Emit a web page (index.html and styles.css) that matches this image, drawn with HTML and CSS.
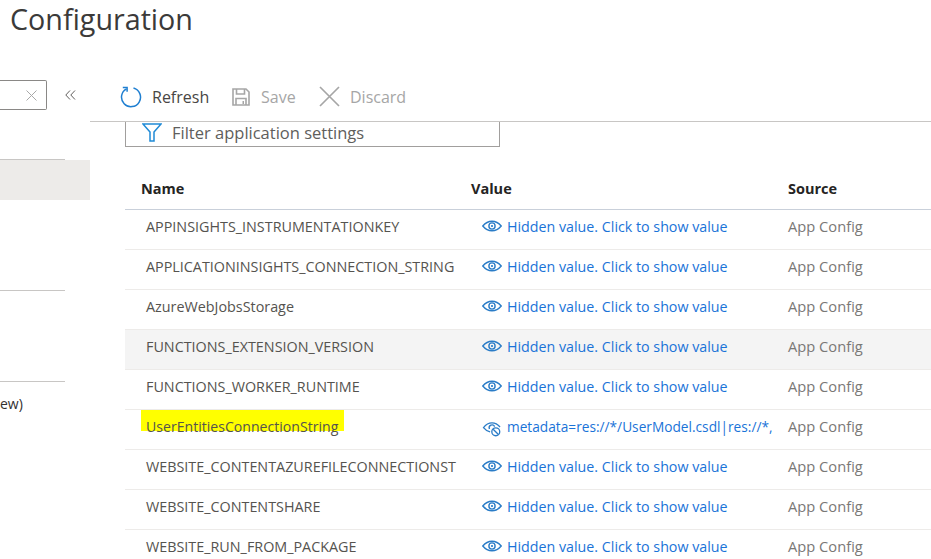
FILE: index.html
```html
<!DOCTYPE html>
<html lang="en">
<head>
<meta charset="utf-8">
<title>Configuration</title>
<link rel="stylesheet" href="styles.css">
</head>
<body>
<svg class="defs" width="0" height="0" aria-hidden="true">
  <symbol id="eye" viewBox="0 0 20 14">
    <path d="M.8 7C3.500 3.700 6.500 2.200 10 2.200s6.500 1.500 9.200 4.800c-2.700 3.300-5.700 4.800-9.200 4.800S3.500 10.300.8 7Z" fill="none" stroke="currentColor" stroke-width="1.400"/>
    <circle cx="10" cy="7" r="3.100" fill="none" stroke="currentColor" stroke-width="1.400"/>
    <circle cx="10" cy="7" r="1.100" fill="currentColor"/>
  </symbol>
  <symbol id="eye-off" viewBox="0 0 20 18">
    <path d="M8 12.500C5.200 12 3 10.500 1 8c2.600-3.400 5.600-5 9-5 3.200 0 6 1.400 8.500 4.400" fill="none" stroke="currentColor" stroke-width="1.400"/>
    <path d="M7.300 9.500A3 3 0 1 1 12.800 7" fill="none" stroke="currentColor" stroke-width="1.400"/>
    <circle cx="14" cy="12.500" r="4.200" fill="none" stroke="currentColor" stroke-width="1.400"/>
    <path d="M11.200 9.700l5.600 5.600" stroke="currentColor" stroke-width="1.400"/>
  </symbol>
</svg>
<h1 class="title">Configuration</h1>
<div class="layout">
  <aside class="sidebar">
    <div class="search-row">
      <div class="search">
        <svg class="search-x" width="11" height="11" viewBox="0 0 11 11"><path d="M.5.500l10 10M10.500.500l-10 10" stroke="#a8a8a8" stroke-width="1"/></svg>
      </div>
      <svg class="collapse" width="11" height="10" viewBox="0 0 11 10"><path d="M5 .5.800 5 5 9.500M10 .5 5.800 5 10 9.500" fill="none" stroke="#605e5c" stroke-width="1"/></svg>
    </div>
    <div class="side-group first"></div>
    <div class="side-selected"></div>
    <div class="side-group second"></div>
    <div class="side-group third"></div>
    <div class="side-text">ew)</div>
  </aside>
  <main class="main">
    <div class="toolbar">
      <button class="tool refresh">
        <svg width="22" height="22" viewBox="0 0 22 22"><path d="M6.500 2.800A9.500 9.500 0 1 0 13.500 2" fill="none" stroke="#1f7fd1" stroke-width="1.500"/><path d="M2.800 1.500h4.300v4.300" fill="none" stroke="#1f7fd1" stroke-width="1.500"/></svg>
        <span>Refresh</span>
      </button>
      <button class="tool disabled save">
        <svg width="18" height="18" viewBox="0 0 18 18"><path d="M1 1h13l3 3v13H1Z" fill="none" stroke="#a6a6a6" stroke-width="1.600"/><path d="M4.500 1v5h8V1M4 17v-6.500h10V17" fill="none" stroke="#a6a6a6" stroke-width="1.600"/><path d="M10.500 13h1.500v3h-1.500z" fill="#a6a6a6"/></svg>
        <span>Save</span>
      </button>
      <button class="tool disabled discard">
        <svg width="21" height="21" viewBox="0 0 21 21"><path d="M1 1l19 19M20 1 1 20" stroke="#a6a6a6" stroke-width="1.700"/></svg>
        <span>Discard</span>
      </button>
    </div>
    <div class="content">
      <div class="filter">
        <svg width="20" height="19" viewBox="0 0 20 19"><path d="M1 1h18l-7 8v9H8V9Z" fill="none" stroke="#1f8ad6" stroke-width="1.500"/></svg>
        <span>Filter application settings</span>
      </div>
      <div class="table">
        <div class="row head">
          <div class="c-name">Name</div>
          <div class="c-value">Value</div>
          <div class="c-source">Source</div>
        </div>
        <div class="row">
          <div class="c-name">APPINSIGHTS_INSTRUMENTATIONKEY</div>
          <a class="c-value"><svg class="ico"><use href="#eye"/></svg>Hidden value. Click to show value</a>
          <div class="c-source">App Config</div>
        </div>
        <div class="row">
          <div class="c-name">APPLICATIONINSIGHTS_CONNECTION_STRING</div>
          <a class="c-value"><svg class="ico"><use href="#eye"/></svg>Hidden value. Click to show value</a>
          <div class="c-source">App Config</div>
        </div>
        <div class="row">
          <div class="c-name">AzureWebJobsStorage</div>
          <a class="c-value"><svg class="ico"><use href="#eye"/></svg>Hidden value. Click to show value</a>
          <div class="c-source">App Config</div>
        </div>
        <div class="row hover">
          <div class="c-name">FUNCTIONS_EXTENSION_VERSION</div>
          <a class="c-value"><svg class="ico"><use href="#eye"/></svg>Hidden value. Click to show value</a>
          <div class="c-source">App Config</div>
        </div>
        <div class="row">
          <div class="c-name">FUNCTIONS_WORKER_RUNTIME</div>
          <a class="c-value"><svg class="ico"><use href="#eye"/></svg>Hidden value. Click to show value</a>
          <div class="c-source">App Config</div>
        </div>
        <div class="row">
          <div class="c-name"><span class="marked">UserEntitiesConnectionString</span></div>
          <a class="c-value"><svg class="ico off"><use href="#eye-off"/></svg><span class="meta">metadata=res://*/UserModel.csdl|res://*,</span></a>
          <div class="c-source">App Config</div>
        </div>
        <div class="row">
          <div class="c-name">WEBSITE_CONTENTAZUREFILECONNECTIONST</div>
          <a class="c-value"><svg class="ico"><use href="#eye"/></svg>Hidden value. Click to show value</a>
          <div class="c-source">App Config</div>
        </div>
        <div class="row">
          <div class="c-name">WEBSITE_CONTENTSHARE</div>
          <a class="c-value"><svg class="ico"><use href="#eye"/></svg>Hidden value. Click to show value</a>
          <div class="c-source">App Config</div>
        </div>
        <div class="row">
          <div class="c-name">WEBSITE_RUN_FROM_PACKAGE</div>
          <a class="c-value"><svg class="ico"><use href="#eye"/></svg>Hidden value. Click to show value</a>
          <div class="c-source">App Config</div>
        </div>
      </div>
    </div>
  </main>
</div>
</body>
</html>
```
FILE: styles.css
```css
* { box-sizing: border-box; }
html, body { margin: 0; height: 559px; overflow: hidden; background: #fff; }
body { font-family: "Open Sans", "Noto Sans", sans-serif; color: #323130; }
.defs { display: block; height: 0; }
.title { margin: 0; padding: 1px 0 0 10px; height: 80px; font-size: 28.700px; font-weight: 400; line-height: 36px; color: #3b3a39; }
.layout { display: flex; height: 479px; }
.sidebar { width: 90px; flex: none; display: flex; flex-direction: column; }
.search-row { display: flex; align-items: center; height: 30px; }
.search { width: 47px; height: 30px; border: 1px solid #8a8886; border-left: 0; border-radius: 0 2px 2px 0; display: flex; align-items: center; justify-content: flex-end; padding-right: 9px; }
.collapse { margin-left: 18px; }
.side-group { width: 65px; border-bottom: 1px solid #c8c6c4; }
.side-group.first { height: 50px; }
.side-selected { height: 40px; background: #edebe9; }
.side-group.second { height: 91px; }
.side-group.third { height: 91px; }
.side-text { height: 30px; line-height: 44px; font-size: 14px; white-space: nowrap; }
.main { flex: 1; min-width: 0; }
.toolbar { display: flex; align-items: center; height: 42px; padding: 0 0 8px 30px; border-bottom: 1px solid #c8c6c4; }
.tool { display: flex; align-items: center; border: 0; padding: 0; background: none; font: inherit; font-size: 16px; color: #484644; }
.tool.disabled { color: #a6a6a6; }
.refresh { gap: 10px; width: 112px; }
.save { gap: 11px; width: 87px; }
.discard { gap: 10px; }
.content { padding-left: 35px; }
.filter { display: flex; align-items: center; gap: 10px; width: 375px; height: 25px; padding: 0 0 4px 16px; border: 1px solid #a19f9d; border-top: 0; font-size: 16.500px; color: #605e5c; }
.table { margin-top: 21px; }
.row { display: flex; align-items: center; height: 40px; padding-bottom: 6px; border-bottom: 1px solid #edebe9; font-size: 14.250px; }
.row.head { height: 42px; padding-bottom: 0; border-bottom: 1px solid #c9d0da; font-weight: 700; color: #252423; font-size: 14.500px; }
.row.hover { background: #f4f4f4; }
.c-name { width: 346px; padding-left: 21px; white-space: nowrap; font-size: 14.350px; color: #55534f; flex: none; }
.c-value { width: 317px; padding-left: 11px; display: flex; align-items: center; white-space: nowrap; color: #1a73d8; flex: none; }
.c-source { color: #7a7876; font-size: 14.700px; padding-bottom: 2px; }
.head .c-name { padding-left: 16px; color: inherit; font-size: inherit; }
.head .c-value { padding-left: 0; color: inherit; }
.head .c-source { color: inherit; font-size: inherit; padding-bottom: 0; }
.ico { width: 20px; height: 14px; margin: 0 5px 2px 0; flex: none; color: #2a7cc7; }
.ico.off { height: 17px; margin: 3px 5px 0 0; }
.meta { font-size: 13.700px; }
.marked { position: relative; display: inline-block; z-index: 0; font-size: 14.100px; }
.marked::before { content: ""; position: absolute; z-index: -1; left: -5px; right: -6px; top: -7px; height: 21px; background: #ffff00; }
```
